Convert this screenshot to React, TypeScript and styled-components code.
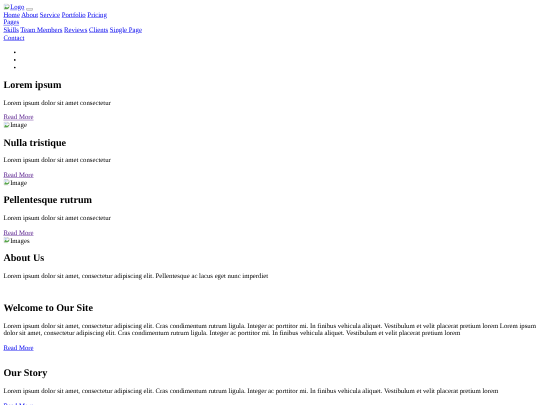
import React from "react";
import styled, { createGlobalStyle } from "styled-components";

// the page is a 1280px wide unstyled document photographed at 540px
const GlobalStyle = createGlobalStyle`
  html {
    background: #fff;
  }
  body {
    margin: 0;
    overflow: hidden;
  }
`;

const Frame = styled("div")`
  width: 540px;
  height: 405px;
  overflow: hidden;
`;

const Page = styled("div")`
  width: 1264px;
  padding: 8px;
  transform: scale(0.421875);
  transform-origin: 0 0;
  filter: blur(0.9px);
  color: #000;
  font-family: "Liberation Serif", "Times New Roman", serif;
  font-size: 16px;
  line-height: 18px;
  text-rendering: geometricPrecision;
`;

const Link = styled("a")<{ $visited?: boolean }>`
  color: ${p => (p.$visited ? "#551a8b" : "#0000ee")};
  text-decoration: underline;
  cursor: pointer;
`;

const NavRow = styled("div")`
  display: block;
`;

const Toggler = styled("button")`
  vertical-align: baseline;
`;

const BrokenIcon = styled("svg")`
  display: inline-block;
  width: 16px;
  height: 16px;
  vertical-align: -2px;
`;

const Dots = styled("ul")`
  margin: 16px 0;
  padding-left: 40px;
  list-style: disc;
`;

const Dot = styled("li")`
  height: 18px;
`;

const Heading = styled("h2")`
  margin: 19.92px 0;
  font-size: 24px;
  line-height: 27px;
  font-weight: bold;
`;

const Text = styled("p")`
  margin: 16px 0;
`;

const ImageRow = styled("div")`
  height: 17.6px;
`;

const Section = styled("section")`
  padding-bottom: 18px;
`;

const BrokenImage: React.FC<{ alt: string }> = ({ alt }) => (
  <span>
    <BrokenIcon viewBox="0 0 16 16">
      <path d="M1.5 1.5h9l4 4v9h-13z" fill="#fff" stroke="#a9a9a9" />
      <path d="M10.5 1.5v4h4" fill="#e8e8e8" stroke="#a9a9a9" />
      <path d="M2.5 13.5v-3l3-3 3 3 5-3v6z" fill="#57a64a" />
      <path d="M3 3h5v4H3z" fill="#b9d2f2" />
      <path d="M15 9 9 15H16z" fill="#fff" />
    </BrokenIcon>
    {alt}
  </span>
);

const slides = [
  { title: "Lorem ipsum", alt: "Image" },
  { title: "Nulla tristique", alt: "Image" },
  { title: "Pellentesque rutrum", alt: "Images" },
];

const loremLong =
  "Lorem ipsum dolor sit amet, consectetur adipiscing elit. Cras condimentum rutrum ligula. Integer ac porttitor mi. In finibus vehicula aliquet. Vestibulum et velit placerat pretium lorem";

export default function App() {
  return (
    <Frame>
      <GlobalStyle />
      <Page>
        <nav>
          <NavRow>
            <Link>
              <BrokenImage alt="Logo" />
            </Link>{" "}
            <Toggler type="button" />
          </NavRow>
          <NavRow>
            <Link>Home</Link> <Link>About</Link> <Link>Service</Link> <Link>Portfolio</Link> <Link>Pricing</Link>
          </NavRow>
          <NavRow>
            <Link>Pages</Link>
          </NavRow>
          <NavRow>
            <Link>Skills</Link> <Link>Team Members</Link> <Link>Reviews</Link> <Link>Clients</Link>{" "}
            <Link>Single Page</Link>
          </NavRow>
          <NavRow>
            <Link>Contact</Link>
          </NavRow>
        </nav>

        <Dots>
          <Dot />
          <Dot />
          <Dot />
        </Dots>

        {slides.map(slide => (
          <div key={slide.title}>
            <Heading>{slide.title}</Heading>
            <Text>Lorem ipsum dolor sit amet consectetur</Text>
            <Link $visited>Read More</Link>
            <ImageRow>
              <BrokenImage alt={slide.alt} />
            </ImageRow>
          </div>
        ))}

        <Section>
          <Heading>About Us</Heading>
          <Text>Lorem ipsum dolor sit amet, consectetur adipiscing elit. Pellentesque ac lacus eget nunc imperdiet</Text>
        </Section>

        <Section>
          <Heading>Welcome to Our Site</Heading>
          <Text>{`${loremLong} ${loremLong}`}</Text>
          <Link>Read More</Link>
        </Section>

        <Section>
          <Heading>Our Story</Heading>
          <Text>{loremLong}</Text>
          <Link>Read More</Link>
        </Section>
      </Page>
    </Frame>
  );
}
